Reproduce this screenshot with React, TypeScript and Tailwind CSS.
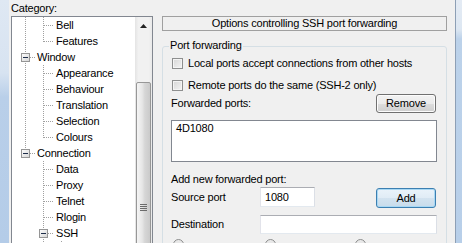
import React from "react";

type TreeRow = { label: string; level: number; box?: boolean };

const rows: TreeRow[] = [
  { label: "Bell", level: 1 },
  { label: "Features", level: 1 },
  { label: "Window", level: 0, box: true },
  { label: "Appearance", level: 1 },
  { label: "Behaviour", level: 1 },
  { label: "Translation", level: 1 },
  { label: "Selection", level: 1 },
  { label: "Colours", level: 1 },
  { label: "Connection", level: 0, box: true },
  { label: "Data", level: 1 },
  { label: "Proxy", level: 1 },
  { label: "Telnet", level: 1 },
  { label: "Rlogin", level: 1 },
  { label: "SSH", level: 1, box: true },
];

const indent = ["pl-[25px]", "pl-[44px]", "pl-[62px]"];

const rowY = (i: number) => 16 * i + 8.5;

function VLine({ x, y1, y2 }: { x: number; y1: number; y2: number }) {
  return <line x1={x + 0.5} x2={x + 0.5} y1={y1} y2={y2} stroke="#a0a0a0" strokeDasharray="1 1" />;
}

function HLine({ y, x1, x2 }: { y: number; x1: number; x2: number }) {
  return <line x1={x1} x2={x2} y1={y} y2={y} stroke="#a0a0a0" strokeDasharray="1 1" />;
}

function MinusBox({ cx, cy }: { cx: number; cy: number }) {
  return (
    <g>
      <rect x={cx - 3.5} y={cy - 4} width={8} height={8} fill="url(#boxfill)" stroke="#959595" />
      <line x1={cx - 2} x2={cx + 3} y1={cy} y2={cy} stroke="#1e2d4a" />
    </g>
  );
}

function TreeLines() {
  return (
    <svg className="pointer-events-none absolute left-0 top-0" width={123} height={240} shapeRendering="crispEdges">
      <defs>
        <linearGradient id="boxfill" x1="0" y1="0" x2="1" y2="1">
          <stop offset="0" stopColor="#ffffff" />
          <stop offset="1" stopColor="#d4d4d4" />
        </linearGradient>
      </defs>
      {/* top level */}
      <VLine x={13} y1={0} y2={rowY(2) - 4} />
      <VLine x={13} y1={rowY(2) + 5} y2={rowY(8) - 4} />
      <HLine y={rowY(2)} x1={18} x2={24} />
      <HLine y={rowY(8)} x1={18} x2={24} />
      {/* Terminal children */}
      <VLine x={31} y1={0} y2={rowY(1)} />
      {/* Window children */}
      <VLine x={31} y1={48} y2={rowY(7)} />
      {/* Connection children */}
      <VLine x={31} y1={144} y2={rowY(13) - 4} />
      <VLine x={31} y1={rowY(13) + 5} y2={240} />
      {rows.map((r, i) =>
        r.level === 1 && !r.box ? <HLine key={i} y={rowY(i)} x1={32} x2={42} /> : null,
      )}
      <HLine y={rowY(13)} x1={36} x2={42} />
      {/* SSH children */}
      <VLine x={49} y1={224} y2={240} />
      <MinusBox cx={13} cy={rowY(2)} />
      <MinusBox cx={13} cy={rowY(8)} />
      <MinusBox cx={31} cy={rowY(13)} />
    </svg>
  );
}

function Scrollbar() {
  return (
    <div className="flex w-[17px] shrink-0 flex-col bg-[linear-gradient(to_right,#e4e4e4,#f1f1f1_20%,#f1f1f1_80%,#e9e9e9)]">
      <div className="flex h-[17px] items-center justify-center">
        <svg width="7" height="4" viewBox="0 0 7 4">
          <path d="M3.5 0 L7 4 L0 4 Z" fill="#222" />
        </svg>
      </div>
      <div className="h-[48px]" />
      <div className="mx-px flex flex-1 flex-col items-center rounded-[2px] border border-[#979797] bg-[linear-gradient(to_right,#f5f5f5,#e6e6e6_40%,#d6d6d6_60%,#cacaca)]">
        <div className="mt-[121px] flex flex-col gap-[1px]">
          <div className="h-px w-[7px] bg-[#6b6b6b]" />
          <div className="h-px w-[7px] bg-[#6b6b6b]" />
          <div className="h-px w-[7px] bg-[#6b6b6b]" />
          <div className="h-px w-[7px] bg-[#6b6b6b]" />
        </div>
      </div>
    </div>
  );
}

function CheckBox({ label }: { label: string }) {
  return (
    <div className="flex h-[13px] items-center gap-[5px] pl-[1px]">
      <div className="h-[11px] w-[11px] border border-[#8e8f8f] bg-[linear-gradient(135deg,#d6d6d6,#f4f4f4)] shadow-[inset_0_0_0_1px_#f4f4f4]" />
      <span className="whitespace-nowrap leading-[13px]">{label}</span>
    </div>
  );
}

export default function App() {
  return (
    <div className="flex h-[243px] w-[462px] overflow-hidden bg-[#f0f0f0] font-['Liberation_Sans',Arial,sans-serif] text-[11px] tracking-[-0.2px] text-black">
      <div className="w-[9px] shrink-0 bg-[linear-gradient(to_bottom,#dfe8f3_0%,#d7e3f1_30%,#b9cfe9_40%,#b4cce8_100%)]" />
      <div className="flex flex-1 pl-[2px]">
        <div className="flex w-[142px] shrink-0 flex-col">
          <div className="h-[16px] leading-[16px]">Category:</div>
          <div className="flex h-[240px] shrink-0 border border-[#828790] bg-white">
            <div className="relative w-[123px] shrink-0 pt-0">
              <TreeLines />
              {rows.map((r, i) => (
                <div key={i} className={`h-[16px] whitespace-nowrap leading-[16px] ${indent[r.level]}`}>
                  {r.label}
                </div>
              ))}
            </div>
            <Scrollbar />
          </div>
        </div>

        <div className="ml-[9px] flex w-[285px] shrink-0 flex-col pt-[16px]">
          <div className="flex h-[17px] items-center justify-center border border-[#a0a0a0] leading-[13px]">
            Options controlling SSH port forwarding
          </div>

          <div className="mt-[15px] flex flex-1 flex-col rounded-[3px] border border-[#d5dfe5] pl-[8px] pr-[9px]">
            <div className="-ml-[2px] -mt-[8px] self-start bg-[#f0f0f0] px-[1px] leading-[13px]">Port forwarding</div>

            <div className="mt-[5px]">
              <CheckBox label="Local ports accept connections from other hosts" />
            </div>
            <div className="mt-[9px]">
              <CheckBox label="Remote ports do the same (SSH-2 only)" />
            </div>

            <div className="mt-[2px] flex h-[19px] items-center justify-between">
              <span className="leading-[13px]">Forwarded ports:</span>
              <button className="mr-[1px] h-[19px] w-[60px] rounded-[3px] border border-[#707070] bg-[linear-gradient(to_bottom,#f2f2f2_0%,#ebebeb_50%,#dddddd_50%,#cfcfcf_100%)] text-[11px] leading-[13px] shadow-[inset_0_0_0_1px_#fcfcfc]">
                Remove
              </button>
            </div>

            <div className="mt-[7px] h-[42px] border border-[#828790] bg-white pl-[4px] pt-[1px] leading-[13px]">4D1080</div>

            <div className="mt-[11px] h-[13px] leading-[13px]">Add new forwarded port:</div>

            <div className="mt-[1px] flex h-[21px] items-start">
              <span className="w-[89px] shrink-0 self-center leading-[13px]">Source port</span>
              <div className="flex h-[20px] w-[55px] items-center border border-[#abadb3] border-b-[#e3e9ef] border-l-[#e2e3ea] border-r-[#dbdfe6] bg-white pl-[4px] leading-[13px]">
                1080
              </div>
              <div className="flex-1" />
              <button className="mr-[1px] mt-[1px] h-[20px] w-[60px] rounded-[3px] border border-[#3c7fb1] bg-[linear-gradient(to_bottom,#eaf3fa_0%,#e0ecf6_50%,#d3e3f0_50%,#c8dceb_100%)] text-[11px] leading-[13px] shadow-[inset_0_0_0_1px_#a8d8f4]">
                Add
              </button>
            </div>

            <div className="mt-[7px] flex h-[19px] items-center">
              <span className="w-[89px] shrink-0 leading-[13px]">Destination</span>
              <div className="h-[19px] flex-1 border border-[#abadb3] border-b-[#e3e9ef] border-l-[#e2e3ea] border-r-[#dbdfe6] bg-white" />
            </div>

            <div className="ml-[2px] mt-[5px] flex">
              <div className="h-[11px] w-[11px] rounded-full border border-[#8e8f8f] bg-[#e8e8e8]" />
              <div className="ml-[81px] h-[11px] w-[11px] rounded-full border border-[#8e8f8f] bg-[#e8e8e8]" />
              <div className="ml-[79px] h-[11px] w-[11px] rounded-full border border-[#8e8f8f] bg-[#e8e8e8]" />
            </div>
          </div>
        </div>
      </div>
      <div className="w-px shrink-0 bg-[#8d9fb5]" />
      <div className="w-[6px] shrink-0 bg-[linear-gradient(to_bottom,#e4ebf4_0%,#dde7f2_12%,#bcd2ea_16%,#b8cfe9_100%)]" />
    </div>
  );
}
